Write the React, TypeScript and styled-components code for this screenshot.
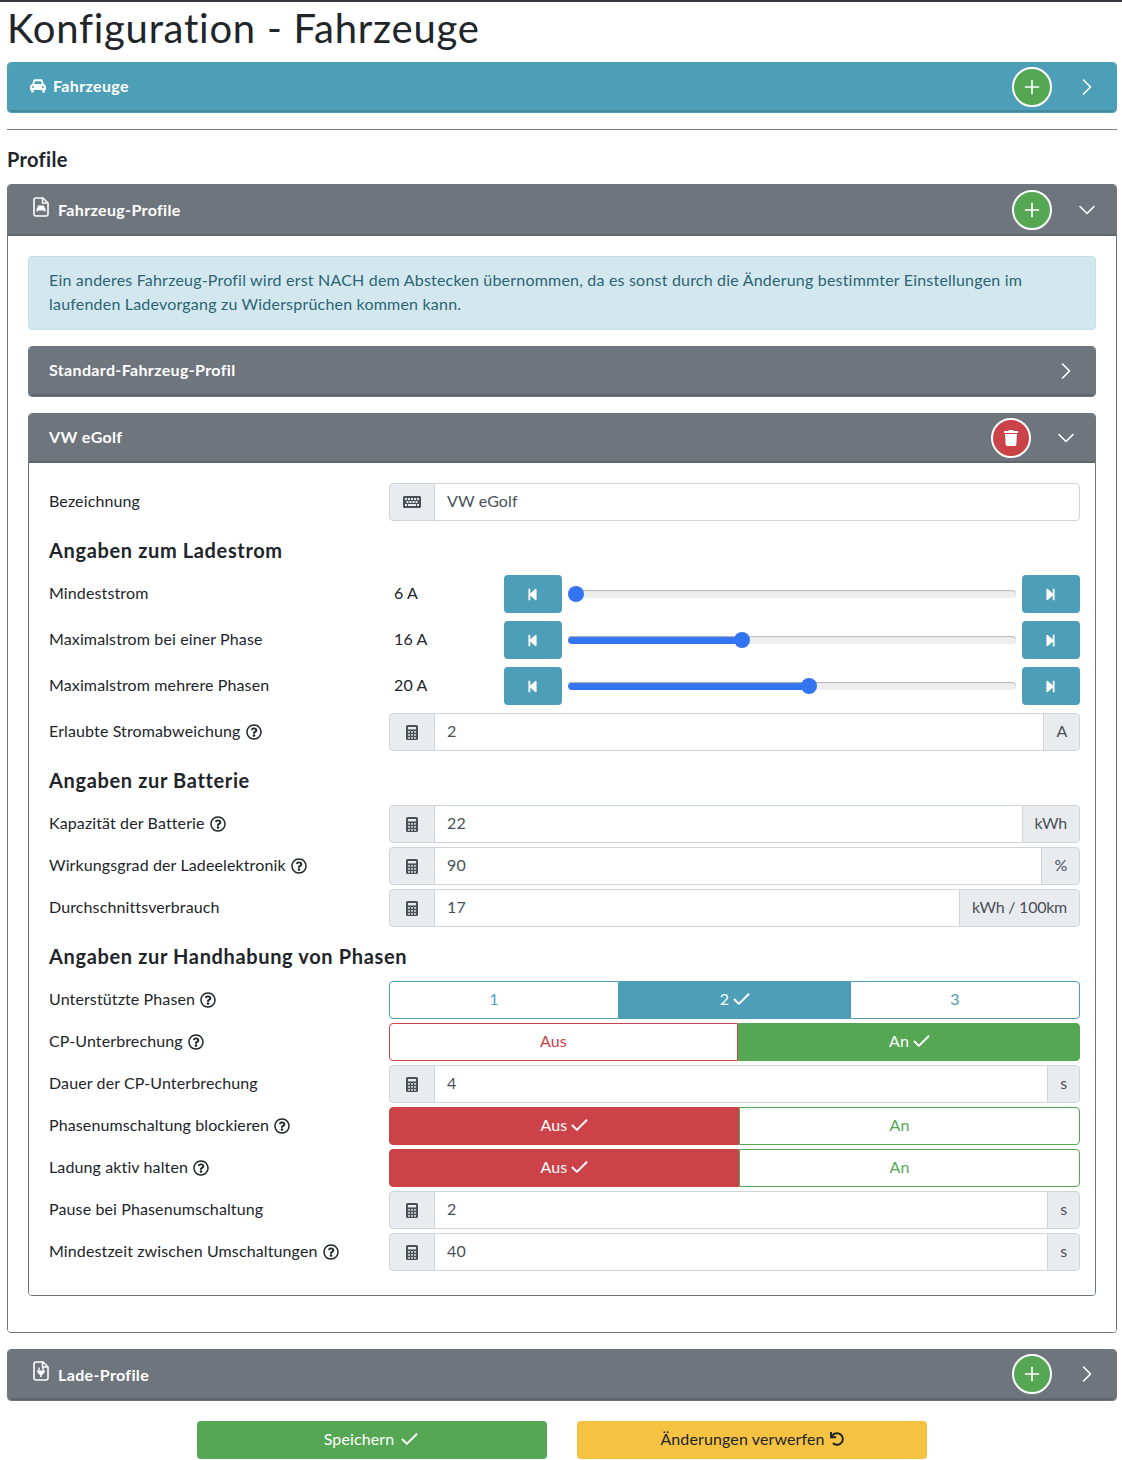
import React from 'react'
import styled, { createGlobalStyle } from 'styled-components'
import {
  FaKeyboard,
  FaRegQuestionCircle,
  FaStepBackward,
  FaStepForward,
  FaTrash,
  FaUndo
} from 'react-icons/fa'
import { Check, ChevronDown, ChevronRight, Plus } from 'lucide-react'

const colors = {
  info: '#4c9fb6',
  secondary: '#6e757d',
  success: '#55a753',
  danger: '#cc4249',
  warning: '#f5c242',
  text: '#212529',
  inputText: '#495057',
  inputBorder: '#ced4da',
  addon: '#e9ecef',
  blue: '#3374f1'
}

type Tone = 'info' | 'success' | 'danger'

const GlobalStyle = createGlobalStyle`
  * {
    box-sizing: border-box;
  }
  body {
    margin: 0;
    background: #fff;
    color: ${colors.text};
    font-family: Lato, "Open Sans", sans-serif;
    font-size: 16px;
    line-height: 24px;
    letter-spacing: 0.12px;
    font-variant-ligatures: none;
  }
`

const Page = styled.div`
  border-top: 2px solid #343a40;
  padding: 0 5px 1px 7px;
`

const Title = styled.h1`
  margin: 0;
  height: 60px;
  font-size: 40px;
  font-weight: 400;
  line-height: 52px;
  letter-spacing: 0.75px;
`

const Card = styled.section<{ $color: string }>`
  border: 1px solid ${({ $color }) => $color};
  border-radius: 4px;
  margin-bottom: 16px;
  overflow: hidden;
`

const CardHeader = styled.header<{ $color: string; $height: number }>`
  display: flex;
  align-items: center;
  height: ${({ $height }) => $height}px;
  padding-left: 20px;
  background: ${({ $color }) => $color};
  border-bottom: 2px solid rgba(0, 0, 0, 0.12);
  color: #fff;
  font-weight: 700;
  letter-spacing: 0.35px;
`

const HeaderIcon = styled.span<{ $indent: number; $width: number; $lift: number }>`
  display: flex;
  flex: none;
  width: ${({ $width }) => $width}px;
  margin-left: ${({ $indent }) => $indent}px;
  margin-top: -${({ $lift }) => $lift}px;
`

const HeaderTitle = styled.span<{ $shift: number }>`
  flex: 1;
  transform: translateY(${({ $shift }) => $shift}px);
`

const RoundButton = styled.button<{ $tone: Tone }>`
  display: flex;
  align-items: center;
  justify-content: center;
  width: 40px;
  height: 40px;
  padding: 0;
  border: 2px solid #fff;
  border-radius: 50%;
  color: #fff;
  background: ${({ $tone }) => colors[$tone]};
`

const Chevron = styled.span`
  display: flex;
  justify-content: center;
  flex: none;
  width: 58px;
  margin-left: 6px;
`

const OuterBody = styled.div`
  padding: 20px;
  background: #fff;
`

const ProfileBody = styled.div`
  padding: 20px 15px 20px 20px;
  background: #fff;
`

const Alert = styled.div`
  margin-bottom: 16px;
  padding: 11px 20px 13px;
  background: #d3e8ee;
  border: 1px solid #c5e1e8;
  border-radius: 4px;
  color: #2b6475;
  letter-spacing: 0.2px;
`

const Divider = styled.hr`
  margin: 0;
  border: 0;
  border-top: 1px solid #7a7a7a;
`

const SectionTitle = styled.h2`
  margin: 0;
  padding: 17px 0 13px;
  font-size: 20px;
  font-weight: 700;
  line-height: 24px;
  letter-spacing: 0.3px;
`

const GroupTitle = styled.h3`
  margin: 0;
  padding: 12px 0 12px;
  font-size: 20px;
  font-weight: 700;
  line-height: 26px;
  letter-spacing: 0.64px;
`

const Row = styled.div<{ $gap?: number }>`
  display: grid;
  grid-template-columns: 340px 1fr;
  align-items: center;
  min-height: 38px;
  margin-bottom: ${({ $gap }) => $gap ?? 4}px;
`

const Label = styled.label`
  display: flex;
  align-items: center;
  gap: 5px;
  padding-bottom: 2px;
`

const HelpIcon = styled(FaRegQuestionCircle)`
  margin-top: 1px;
`

const InputGroup = styled.div`
  display: flex;
  height: 38px;
`

const Addon = styled.span<{ $side: 'left' | 'right' }>`
  display: flex;
  align-items: center;
  justify-content: center;
  flex: none;
  padding: ${({ $side }) => ($side === 'right' ? '0 12px 2px' : '0 12px')};
  min-width: ${({ $side }) => ($side === 'left' ? '46px' : '0')};
  background: ${colors.addon};
  border: 1px solid ${colors.inputBorder};
  color: ${colors.inputText};
  letter-spacing: ${({ $side }) => ($side === 'right' ? '-0.25px' : '0')};
  border-radius: ${({ $side }) => ($side === 'left' ? '4px 0 0 4px' : '0 4px 4px 0')};
  margin-left: ${({ $side }) => ($side === 'right' ? '-1px' : '0')};
`

const TextField = styled.input<{ $last: boolean }>`
  flex: 1;
  min-width: 0;
  margin-left: -1px;
  padding: 0 12px 2px;
  border: 1px solid ${colors.inputBorder};
  border-radius: ${({ $last }) => ($last ? '0 4px 4px 0' : '0')};
  color: ${colors.inputText};
  font: inherit;
  letter-spacing: inherit;
`

const SliderControls = styled.div`
  display: grid;
  grid-template-columns: 115px 58px 1fr 58px;
  align-items: center;
`

const SliderValue = styled.span`
  padding: 0 0 2px 5px;
`

const StepButton = styled.button`
  display: flex;
  align-items: center;
  justify-content: center;
  height: 38px;
  padding: 0 1px 0 0;
  border: 0;
  border-radius: 4px;
  background: ${colors.info};
  color: #fff;
`

const Range = styled.input`
  -webkit-appearance: none;
  appearance: none;
  width: 450px;
  height: 16px;
  margin: 0 5px;
  background: transparent;

  &::-webkit-slider-runnable-track {
    height: 8px;
    margin: 0 1px;
    border-radius: 4px;
    background: linear-gradient(to right, ${colors.blue} var(--fill), #eeeeee var(--fill));
    box-shadow: inset 0 1px 1px #b5b5b5;
  }

  &::-webkit-slider-thumb {
    -webkit-appearance: none;
    width: 16px;
    height: 16px;
    margin-top: -4px;
    border-radius: 50%;
    background: ${colors.blue};
  }
`

const Toggle = styled.div<{ $columns: string }>`
  display: grid;
  grid-template-columns: ${({ $columns }) => $columns};
  height: 38px;
`

const ToggleButton = styled.button<{ $tone: Tone; $active: boolean }>`
  display: flex;
  align-items: center;
  justify-content: center;
  padding: 0 0 2px;
  border: 1px solid ${({ $tone }) => colors[$tone]};
  background: ${({ $tone, $active }) => ($active ? colors[$tone] : '#fff')};
  color: ${({ $tone, $active }) => ($active ? '#fff' : colors[$tone])};
  font: inherit;
  letter-spacing: inherit;

  &:first-child {
    border-radius: 4px 0 0 4px;
  }
  &:last-child {
    border-radius: 0 4px 4px 0;
  }
`

const CheckMark = styled(Check)<{ $visible: boolean }>`
  margin: 0 -3px 0 2px;
  visibility: ${({ $visible }) => ($visible ? 'visible' : 'hidden')};
`

const Actions = styled.div`
  display: flex;
  justify-content: center;
  gap: 30px;
  margin-top: 20px;
`

const ActionButton = styled.button<{ $bg: string; $fg: string }>`
  display: flex;
  align-items: center;
  justify-content: center;
  gap: 5px;
  width: 350px;
  height: 38px;
  padding: 0 0 2px;
  border: 0;
  border-radius: 4px;
  background: ${({ $bg }) => $bg};
  color: ${({ $fg }) => $fg};
  font: inherit;
  letter-spacing: inherit;
`

const CarIcon = () => (
  <svg width="16" height="14" viewBox="0 0 16 14">
    <path
      fill="#fff"
      fillRule="evenodd"
      d="M3.3 1.5Q3.6.3 5 .3h6q1.4 0 1.7 1.2l1 3.5Q16 5.5 16 7.5V11h-1.2v2.5h-2.5V11H3.7v2.5H1.2V11H0V7.5Q0 5.5 2.3 5zM5 2.2h6L11.8 5H4.2zM3 7a1 1 0 1 0 0 2 1 1 0 0 0 0-2zm10 0a1 1 0 1 0 0 2 1 1 0 0 0 0-2z"
    />
  </svg>
)

const FileCarIcon = () => (
  <svg width="16" height="20" viewBox="0 0 16 20" fill="none">
    <path d="M3 1h7l5 5v11a2 2 0 0 1-2 2H3a2 2 0 0 1-2-2V3a2 2 0 0 1 2-2z" stroke="#fff" strokeWidth="1.6" />
    <path d="M9.5 1v5h5" stroke="#fff" strokeWidth="1.4" />
    <path d="M5.2 8.5h5.6l1 2.6c.5.2.7.6.7 1v2.4h-1.6v-1H5.1v1H3.5v-2.4c0-.4.2-.8.7-1z" fill="#fff" />
  </svg>
)

const FilePlugIcon = () => (
  <svg width="16" height="20" viewBox="0 0 16 20" fill="none">
    <path d="M3 1h7l5 5v11a2 2 0 0 1-2 2H3a2 2 0 0 1-2-2V3a2 2 0 0 1 2-2z" stroke="#fff" strokeWidth="1.6" />
    <path d="M9.5 1v5h5" stroke="#fff" strokeWidth="1.4" />
    <path d="M6 6.5v3M10 6.5v3" stroke="#fff" strokeWidth="1.4" />
    <path d="M4 9.5h8v1.2l-2.5 3H8.8V16H7.2v-2.3H6.5L4 10.7z" fill="#fff" />
  </svg>
)

const KEY_POSITIONS = [
  [2, 6], [5, 6], [8, 6],
  [2, 9], [5, 9], [8, 9],
  [2, 12], [5, 12], [8, 12]
]

const CalculatorIcon = () => (
  <svg width="12" height="15" viewBox="0 0 12 15">
    <rect width="12" height="15" rx="1.6" fill={colors.inputText} />
    <rect x="2" y="2" width="8" height="2.4" fill={colors.addon} />
    {KEY_POSITIONS.map(([x, y]) => (
      <rect key={`${x}-${y}`} x={x} y={y} width="2" height="1.8" fill="#c4c8cc" />
    ))}
  </svg>
)

interface InputRowProps {
  label: string
  value: string
  help?: boolean
  unit?: string
  keyboard?: boolean
}

const InputRow = ({ label, value, help, unit, keyboard }: InputRowProps) => (
  <Row>
    <Label>
      {label}
      {help && <HelpIcon size={16} />}
    </Label>
    <InputGroup>
      <Addon $side="left">{keyboard ? <FaKeyboard size={18} /> : <CalculatorIcon />}</Addon>
      <TextField $last={!unit} defaultValue={value} />
      {unit && <Addon $side="right">{unit}</Addon>}
    </InputGroup>
  </Row>
)

const RANGE_MIN = 6
const RANGE_MAX = 32

const SliderRow = ({ label, value }: { label: string; value: number }) => {
  const fill = `${((value - RANGE_MIN) / (RANGE_MAX - RANGE_MIN)) * 100}%`
  return (
    <Row $gap={8}>
      <Label>{label}</Label>
      <SliderControls>
        <SliderValue>{value} A</SliderValue>
        <StepButton>
          <FaStepBackward size={13} />
        </StepButton>
        <Range
          type="range"
          min={RANGE_MIN}
          max={RANGE_MAX}
          defaultValue={value}
          style={{ '--fill': fill } as React.CSSProperties}
        />
        <StepButton>
          <FaStepForward size={13} />
        </StepButton>
      </SliderControls>
    </Row>
  )
}

interface ToggleOption {
  label: string
  tone: Tone
  active?: boolean
}

const ToggleRow = ({ label, help, columns, options }: { label: string; help?: boolean; columns: string; options: ToggleOption[] }) => (
  <Row>
    <Label>
      {label}
      {help && <HelpIcon size={16} />}
    </Label>
    <Toggle $columns={columns}>
      {options.map((option) => (
        <ToggleButton key={option.label} $tone={option.tone} $active={!!option.active}>
          {option.label}
          <CheckMark $visible={!!option.active} size={21} strokeWidth={2.3} />
        </ToggleButton>
      ))}
    </Toggle>
  </Row>
)

const PanelHeader = ({ color, title, height = 49, shift = -1, icon, open, action }: {
  color: string
  title: string
  height?: number
  shift?: number
  icon?: React.ReactNode
  open?: boolean
  action?: React.ReactNode
}) => (
  <CardHeader $color={color} $height={height}>
    {icon}
    <HeaderTitle $shift={shift}>{title}</HeaderTitle>
    {action}
    <Chevron>{open ? <ChevronDown size={28} strokeWidth={1.4} /> : <ChevronRight size={28} strokeWidth={1.4} />}</Chevron>
  </CardHeader>
)

const addButton = (
  <RoundButton $tone="success">
    <Plus size={22} strokeWidth={1.9} />
  </RoundButton>
)

export default function App () {
  return (
    <Page>
      <GlobalStyle />
      <Title>Konfiguration - Fahrzeuge</Title>

      <Card $color={colors.info}>
        <PanelHeader
          color={colors.info}
          title="Fahrzeuge"
          icon={<HeaderIcon $indent={2} $width={23} $lift={1}><CarIcon /></HeaderIcon>}
          action={addButton}
        />
      </Card>

      <Divider />
      <SectionTitle>Profile</SectionTitle>

      <Card $color={colors.secondary}>
        <PanelHeader
          color={colors.secondary}
          title="Fahrzeug-Profile"
          height={51}
          shift={0}
          icon={<HeaderIcon $indent={5} $width={25} $lift={6}><FileCarIcon /></HeaderIcon>}
          open
          action={addButton}
        />
        <OuterBody>
          <Alert>
            Ein anderes Fahrzeug-Profil wird erst NACH dem Abstecken übernommen, da es sonst durch die Änderung bestimmter Einstellungen im laufenden Ladevorgang zu Widersprüchen kommen kann.
          </Alert>

          <Card $color={colors.secondary}>
            <PanelHeader color={colors.secondary} title="Standard-Fahrzeug-Profil" />
          </Card>

          <Card $color={colors.secondary}>
            <PanelHeader
              color={colors.secondary}
              title="VW eGolf"
              open
              action={(
                <RoundButton $tone="danger">
                  <FaTrash size={16} />
                </RoundButton>
              )}
            />
            <ProfileBody>
              <InputRow label="Bezeichnung" value="VW eGolf" keyboard />

              <GroupTitle>Angaben zum Ladestrom</GroupTitle>
              <SliderRow label="Mindeststrom" value={6} />
              <SliderRow label="Maximalstrom bei einer Phase" value={16} />
              <SliderRow label="Maximalstrom mehrere Phasen" value={20} />
              <InputRow label="Erlaubte Stromabweichung" value="2" unit="A" help />

              <GroupTitle>Angaben zur Batterie</GroupTitle>
              <InputRow label="Kapazität der Batterie" value="22" unit="kWh" help />
              <InputRow label="Wirkungsgrad der Ladeelektronik" value="90" unit="%" help />
              <InputRow label="Durchschnittsverbrauch" value="17" unit="kWh / 100km" />

              <GroupTitle>Angaben zur Handhabung von Phasen</GroupTitle>
              <ToggleRow
                label="Unterstützte Phasen"
                help
                columns="230px 231px 1fr"
                options={[
                  { label: '1', tone: 'info' },
                  { label: '2', tone: 'info', active: true },
                  { label: '3', tone: 'info' }
                ]}
              />
              <ToggleRow
                label="CP-Unterbrechung"
                help
                columns="349px 1fr"
                options={[
                  { label: 'Aus', tone: 'danger' },
                  { label: 'An', tone: 'success', active: true }
                ]}
              />
              <InputRow label="Dauer der CP-Unterbrechung" value="4" unit="s" />
              <ToggleRow
                label="Phasenumschaltung blockieren"
                help
                columns="350px 1fr"
                options={[
                  { label: 'Aus', tone: 'danger', active: true },
                  { label: 'An', tone: 'success' }
                ]}
              />
              <ToggleRow
                label="Ladung aktiv halten"
                help
                columns="350px 1fr"
                options={[
                  { label: 'Aus', tone: 'danger', active: true },
                  { label: 'An', tone: 'success' }
                ]}
              />
              <InputRow label="Pause bei Phasenumschaltung" value="2" unit="s" />
              <InputRow label="Mindestzeit zwischen Umschaltungen" value="40" unit="s" help />
            </ProfileBody>
          </Card>
        </OuterBody>
      </Card>

      <Card $color={colors.secondary}>
        <PanelHeader
          color={colors.secondary}
          title="Lade-Profile"
          height={50}
          shift={1}
          icon={<HeaderIcon $indent={5} $width={25} $lift={6}><FilePlugIcon /></HeaderIcon>}
          action={addButton}
        />
      </Card>

      <Actions>
        <ActionButton $bg={colors.success} $fg="#fff">
          Speichern
          <Check size={21} strokeWidth={2.2} />
        </ActionButton>
        <ActionButton $bg={colors.warning} $fg={colors.text}>
          Änderungen verwerfen
          <FaUndo size={14} />
        </ActionButton>
      </Actions>
    </Page>
  )
}
